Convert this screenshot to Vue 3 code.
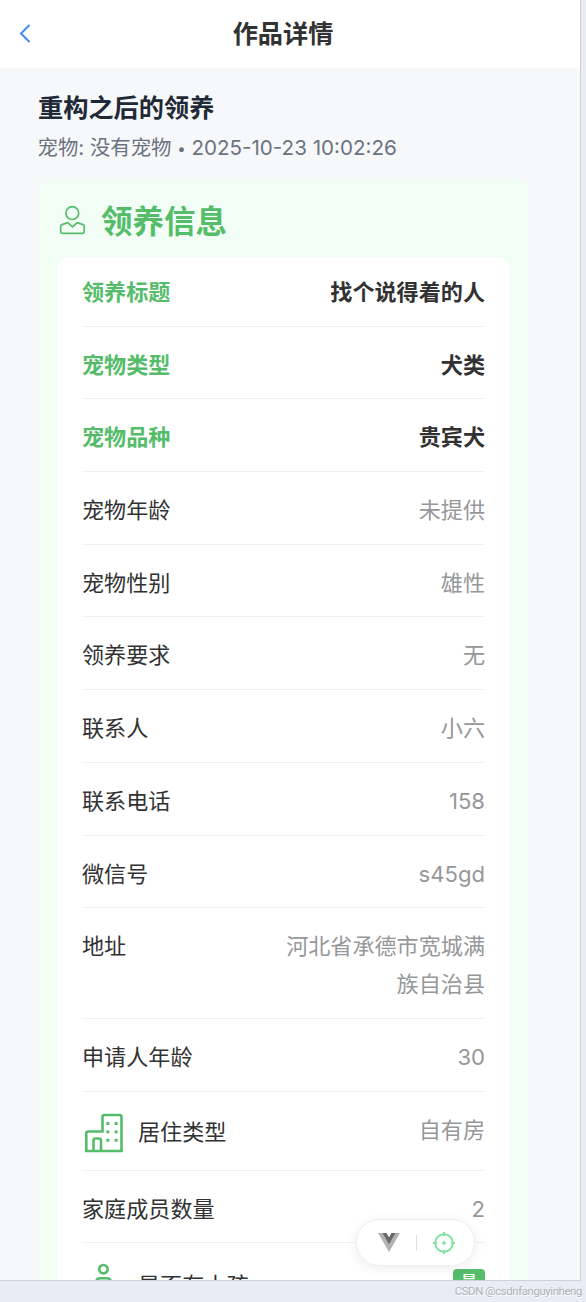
<template>
  <div class="stage">
    <div class="phone">
      <header class="nav-bar">
        <svg class="back" width="14" height="22" viewBox="0 0 14 22">
          <path d="M12.5 2 L4 10.5 L12.5 19" />
        </svg>
        <h1>作品详情</h1>
      </header>

      <main class="content">
        <h2 class="title">重构之后的领养</h2>
        <p class="meta">宠物: 没有宠物 <span class="bullet">•</span> <span class="time">2025-10-23 10:02:26</span></p>

        <section class="adopt">
          <div class="adopt-head">
            <svg width="28" height="30" viewBox="0 0 28 30">
              <circle cx="13.3" cy="8.1" r="6.4" />
              <path d="M8.8 17.6 L3 19.6 Q1.7 20.2 1.7 21.5 V26.6 Q1.7 28.3 3.2 28.3 H23.8 Q25.2 28.3 25.2 26.6 V21.5 Q25.2 20.2 24 19.6 L18.2 17.6 L13.5 21.8 Z" />
            </svg>
            <h3>领养信息</h3>
          </div>

          <div class="card">
            <div v-for="row in rows" :key="row.label" class="row" :class="row.icon">
              <div class="label" :class="{ strong: row.strong }">
                <svg v-if="row.icon === 'house'" class="row-icon" width="38" height="40" viewBox="0 0 38 40">
                  <path d="M1.3 38 V20.5 Q1.3 18.5 3.3 18.5 H17.5 V4 Q17.5 2 19.5 2 H34.5 Q36.5 2 36.5 4 V38 Z" />
                  <path d="M8.5 38 V27.5 Q8.5 25.5 10.5 25.5 H14 Q16 25.5 16 27.5 V38" />
                  <g class="windows">
                    <rect v-for="n in 6" :key="n" :x="21.3 + ((n - 1) % 2) * 8.3" :y="9 + Math.floor((n - 1) / 2) * 8.4" width="3" height="3" />
                  </g>
                </svg>
                <svg v-if="row.icon === 'child'" class="row-icon" width="40" height="40" viewBox="0 0 40 40">
                  <circle cx="21.4" cy="6.2" r="4.2" />
                  <path d="M14.5 29 V18.5 Q14.5 15.2 18 15.2 H25 Q28.5 15.2 28.5 18.5 V29" />
                </svg>
                <span>{{ row.label }}</span>
              </div>
              <span v-if="row.icon === 'child'" class="tag">是</span>
              <div v-else class="value" :class="{ dark: row.strong }">{{ row.value }}</div>
            </div>
          </div>
        </section>
      </main>

      <div class="devtools">
        <svg width="22" height="19" viewBox="0 0 22 19">
          <path fill="#b2b2b2" d="M0 0 H4.4 L11 11.4 L17.6 0 H22 L11 19 Z" />
          <path fill="#686868" d="M4.4 0 H8.5 L11 4.2 L13.5 0 H17.6 L11 11.4 Z" />
        </svg>
        <i></i>
        <svg class="target" width="24" height="24" viewBox="0 0 24 24">
          <circle cx="12" cy="12" r="8.8" />
          <path d="M12 1 V5 M12 19 V23 M1 12 H5 M19 12 H23" />
          <circle class="dot" cx="12" cy="12" r="1.9" />
        </svg>
      </div>
    </div>
    <span class="watermark">CSDN @csdnfanguyinheng</span>
  </div>
</template>

<script setup>
const rows = [
  { label: '领养标题', value: '找个说得着的人', strong: true },
  { label: '宠物类型', value: '犬类', strong: true },
  { label: '宠物品种', value: '贵宾犬', strong: true },
  { label: '宠物年龄', value: '未提供' },
  { label: '宠物性别', value: '雄性' },
  { label: '领养要求', value: '无' },
  { label: '联系人', value: '小六' },
  { label: '联系电话', value: '158' },
  { label: '微信号', value: 's45gd' },
  { label: '地址', value: '河北省承德市宽城满族自治县' },
  { label: '申请人年龄', value: '30' },
  { label: '居住类型', value: '自有房', icon: 'house' },
  { label: '家庭成员数量', value: '2' },
  { label: '是否有小孩', icon: 'child' },
];
</script>

<style>
body {
  margin: 0;
  overflow: hidden;
}
</style>

<style scoped>
.stage {
  position: relative;
  width: 586px;
  height: 1302px;
  overflow: hidden;
  background: #e8ecf5;
  font-family: Inter, "Noto Sans CJK SC", sans-serif;
}

.phone {
  position: relative;
  box-sizing: border-box;
  width: 581px;
  height: 1281px;
  overflow: hidden;
  background: #f7f8fa;
  border: solid #cfd1d7;
  border-width: 0 1px 1px 0;
}

h1, h2, h3, p {
  margin: 0;
}

svg {
  display: block;
  flex: none;
}

.nav-bar {
  display: flex;
  align-items: center;
  height: 68px;
  padding-left: 17px;
  background: #fff;
}

.back {
  fill: none;
  stroke: #3f8cf5;
  stroke-width: 2;
}

.nav-bar h1 {
  flex: 1;
  padding-right: 45px;
  text-align: center;
  font-size: 25.2px;
  line-height: 36px;
  font-weight: 600;
  color: #323233;
}

.content {
  padding: 21px 52px 0 38px;
}

.title {
  font-size: 25.2px;
  line-height: 38px;
  font-weight: 600;
  color: #1f2937;
}

.meta {
  margin-top: 5px;
  margin-left: -0.5px;
  font-size: 20.4px;
  line-height: 31px;
  color: #6b7280;
  white-space: nowrap;
}

.bullet {
  font-size: 15px;
  line-height: 1;
  vertical-align: 1px;
}

.time {
  font-size: 20.6px;
}

.adopt {
  margin-top: 16px;
  height: 1200px;
  box-sizing: border-box;
  width: 490px;
  padding: 18px 18px 0 19px;
  border-radius: 13px;
  background: #f2fdf5;
}

.adopt-head {
  display: flex;
  align-items: center;
  height: 46px;
  margin-bottom: 14px;
}

.adopt-head svg {
  margin: 2px 15px 2px 2px;
  fill: none;
  stroke: #55bd6a;
  stroke-width: 1.7;
  stroke-linejoin: round;
}

.adopt-head h3 {
  padding-top: 3px;
  margin-left: -1px;
  font-size: 31.5px;
  line-height: 46px;
  font-weight: 700;
  color: #55bd6a;
}

.card {
  height: 1100px;
  padding: 0 25px;
  background: #fff;
  border-radius: 13px;
}

.row {
  display: flex;
  justify-content: space-between;
  align-items: flex-start;
  box-sizing: border-box;
  padding: 19px 0 14.7px;
  border-bottom: 1px solid #f0f1f2;
  font-size: 22.1px;
  line-height: 38px;
}

.row:first-child {
  padding-top: 16px;
}

.label {
  display: flex;
  align-items: center;
  color: #323233;
}

.strong {
  font-weight: 700;
  color: #55bd6a;
}

.value {
  max-width: 202px;
  text-align: right;
  color: #969799;
}

.value.dark {
  font-weight: 600;
  color: #323233;
}

.house .label {
  height: 44.5px;
}

.house .label span {
  margin-top: -1px;
}

.row-icon {
  margin: 0 15px 0 3px;
  fill: none;
  stroke: #55bd6a;
  stroke-width: 2.6;
}

.windows {
  fill: #55bd6a;
  stroke: none;
}

.child {
  padding-top: 17px;
}

.child .row-icon {
  margin: 0 16px 0 0;
}

.child .label {
  height: 45px;
}

.child .label span {
  margin-top: 4px;
}

.tag {
  width: 32px;
  height: 30px;
  margin-top: 9px;
  border-radius: 4px;
  background: #55bd6a;
  color: #fff;
  font-size: 16px;
  font-weight: 500;
  line-height: 24px;
  text-align: center;
}

.devtools {
  position: absolute;
  left: 356px;
  top: 1219px;
  box-sizing: border-box;
  display: flex;
  align-items: center;
  width: 119px;
  height: 47px;
  padding-left: 21px;
  border: 1px solid #efefef;
  border-radius: 24px;
  background: #fff;
  box-shadow: 0 2px 12px rgba(0, 0, 0, 0.08);
}

.devtools i {
  width: 1px;
  height: 16px;
  margin: 0 15px 0 16px;
  background: #dedede;
}

.target {
  fill: none;
  stroke: #85e2a3;
  stroke-width: 2;
}

.target .dot {
  fill: #85e2a3;
  stroke: none;
}

.watermark {
  position: absolute;
  right: 4px;
  bottom: 3px;
  font-family: Roboto, "Liberation Sans", sans-serif;
  font-size: 11.5px;
  line-height: 16px;
  letter-spacing: -0.45px;
  color: #b0b2b8;
  text-shadow: 0.5px 0.5px #fff;
  white-space: nowrap;
}
</style>
